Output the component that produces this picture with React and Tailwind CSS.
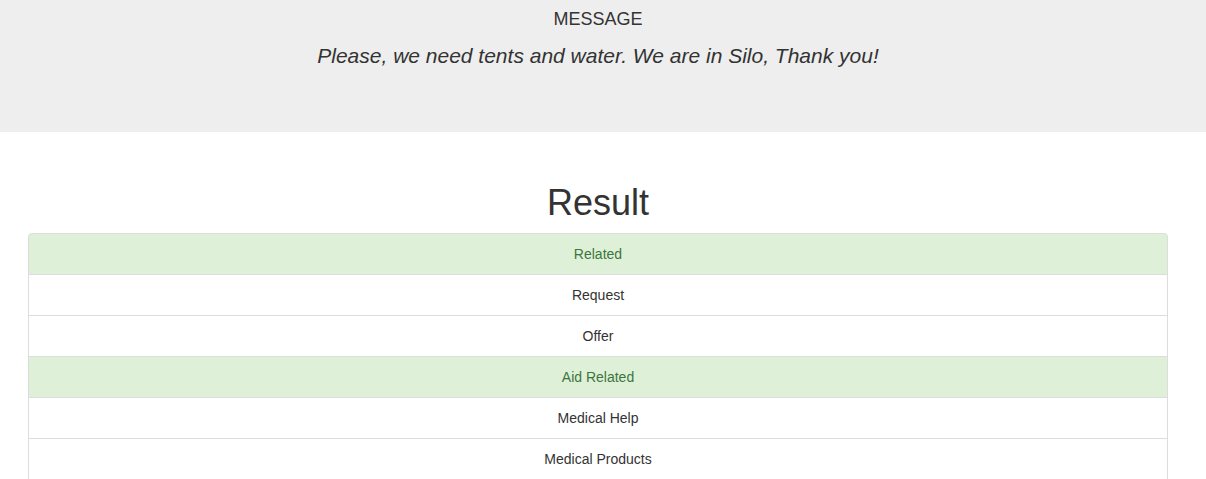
export default function App() {
  const items = [
    { label: 'Related', on: true },
    { label: 'Request', on: false },
    { label: 'Offer', on: false },
    { label: 'Aid Related', on: true },
    { label: 'Medical Help', on: false },
    { label: 'Medical Products', on: false },
  ]

  return (
    <div className="h-[479px] overflow-hidden bg-white text-[#333] font-['Liberation_Sans',Arial,sans-serif]">
      {/* Jumbotron */}
      <div className="h-[132px] bg-[#eee] pt-[9px] pr-[10px]">
        <h4 className="text-center text-[18px] leading-[20px]">MESSAGE</h4>
        <p className="mt-[12px] text-center text-[21px] leading-[30px] italic">
          Please, we need tents and water. We are in Silo, Thank you!
        </p>
      </div>

      <div className="ml-[28px] w-[1140px]">
        <h1 className="mt-[51px] mb-[10px] text-center text-[36px] leading-[40px]">Result</h1>
        <ul>
          {items.map((item, i) => (
            <li
              key={item.label}
              className={`-mb-px border border-[#ddd] py-[10px] px-[15px] text-center text-[14px] leading-[20px] ${
                i === 0 ? 'rounded-t-[4px]' : ''
              } ${item.on ? 'bg-[#dff0d8] text-[#3c763d]' : 'bg-white text-[#333]'}`}
            >
              {item.label}
            </li>
          ))}
        </ul>
      </div>
    </div>
  )
}
